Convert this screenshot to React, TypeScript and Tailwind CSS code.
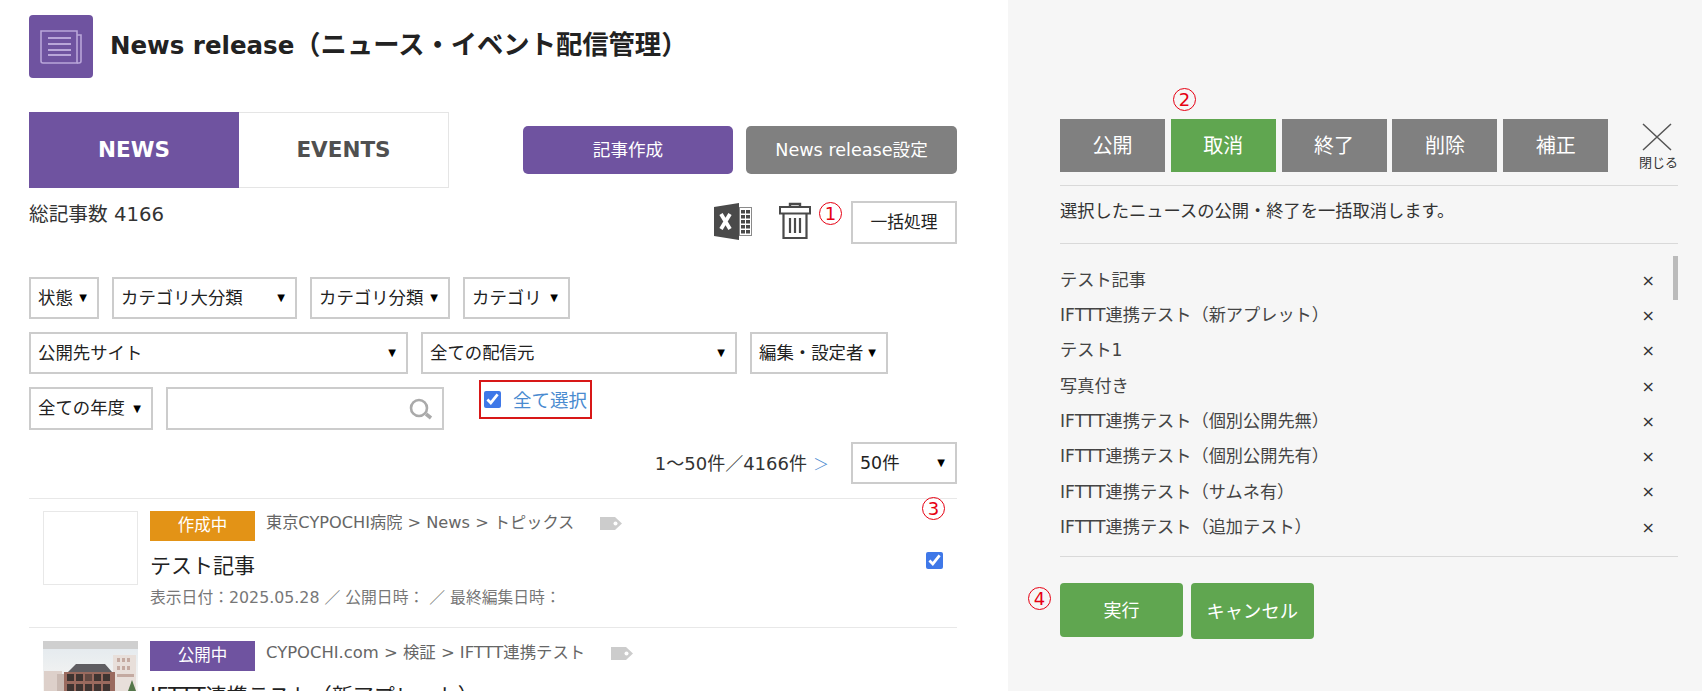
import React from "react";

function Select({ w, label, h = "h-[42px]" }: { w: string; label: string; h?: string }) {
  return (
    <div className={`${w} ${h} flex items-center justify-between border-2 border-[#cccccc] bg-white pl-[7px] pr-[10px] text-[17.4px] text-[#222222]`}>
      <span className="whitespace-nowrap">{label}</span>
      <span className="text-[10px] leading-none text-black">▼</span>
    </div>
  );
}

function Num({ c, className }: { c: string; className: string }) {
  return (
    <span className={`absolute flex h-[23px] w-[23px] items-center justify-center rounded-full border border-[#e60012] text-[18px] leading-none text-[#e60012] ${className}`}>
      {c}
    </span>
  );
}

function Tag({ className }: { className: string }) {
  return (
    <svg viewBox="0 0 22 13" className={className} fill="#cccccc">
      <path d="M0 0h15l7 6.500-7 6.500H0z" />
      <circle cx="15.500" cy="6.500" r="2" fill="#fff" />
    </svg>
  );
}

function Building() {
  return (
    <svg viewBox="0 0 95 50" className="block h-[50px] w-[95px]">
      <defs>
        <linearGradient id="sky" x1="0" y1="0" x2="0" y2="1">
          <stop offset="0" stopColor="#e2e9ee" />
          <stop offset="1" stopColor="#f8f6f3" />
        </linearGradient>
      </defs>
      <rect width="95" height="50" fill="url(#sky)" />
      <rect width="95" height="8" fill="#cfcfcf" />
      <rect x="1" y="30" width="18" height="20" fill="#ddd0ca" />
      <rect x="14" y="33" width="8" height="17" fill="#c9b9b2" />
      <rect x="70" y="14" width="23" height="36" fill="#e8dfda" />
      <g fill="#c4aaa1">
        <rect x="74" y="17" width="3" height="4" />
        <rect x="79" y="17" width="3" height="4" />
        <rect x="84" y="17" width="3" height="4" />
        <rect x="74" y="25" width="3" height="4" />
        <rect x="79" y="25" width="3" height="4" />
        <rect x="84" y="25" width="3" height="4" />
        <rect x="74" y="33" width="17" height="3" />
      </g>
      <path d="M33 23h29l7 8H25z" fill="#5f5d61" />
      <rect x="21" y="31" width="51" height="19" fill="#9a6a5e" />
      <g fill="#3f3431">
        <rect x="24" y="33" width="7" height="7" />
        <rect x="33" y="33" width="7" height="7" />
        <rect x="42" y="33" width="7" height="7" opacity="0.6" />
        <rect x="51" y="33" width="7" height="7" />
        <rect x="60" y="33" width="7" height="7" />
        <rect x="24" y="43" width="7" height="7" />
        <rect x="33" y="43" width="7" height="7" />
        <rect x="42" y="43" width="7" height="7" />
        <rect x="51" y="43" width="7" height="7" />
        <rect x="60" y="43" width="7" height="7" />
      </g>
      <path d="M85 50 L89 39 L93 50z" fill="#55774a" />
    </svg>
  );
}

const titles = [
  "テスト記事",
  "IFTTT連携テスト（新アプレット）",
  "テスト1",
  "写真付き",
  "IFTTT連携テスト（個別公開先無）",
  "IFTTT連携テスト（個別公開先有）",
  "IFTTT連携テスト（サムネ有）",
  "IFTTT連携テスト（追加テスト）",
];

export default function App() {
  return (
    <div className="flex h-[691px] overflow-hidden bg-white font-['DejaVu_Sans','Noto_Sans_CJK_JP',sans-serif] text-[#333333]">
      {/* left */}
      <div className="relative w-[1008px] shrink-0 pl-[29px] pr-[51px] pt-[15px]">
        <div className="flex h-[63px] items-center gap-[17px]">
          <div className="flex h-[63px] w-[64px] items-center justify-center rounded-[4px] bg-[#6f53a0]">
            <svg viewBox="0 0 44 36" className="h-[36px] w-[44px]" fill="none" stroke="#b9a6d9" strokeWidth="1.600">
              <path d="M2 2h36v32H4a2 2 0 0 1-2-2z" />
              <path d="M38 6h4v26a2 2 0 0 1-2 2h-2" />
              <path d="M9 9h23M9 15h23M9 21h23M9 26h23" strokeWidth="1.800" />
            </svg>
          </div>
          <h1 className="mt-[-3px] whitespace-nowrap text-[26.300px] font-bold leading-none text-[#222222]">
            <span className="text-[24.500px]">News release</span>（ニュース・イベント配信管理）
          </h1>
        </div>

        <div className="mt-[34px] flex items-start justify-between">
          <div className="flex h-[76px] w-[420px]">
            <div className="flex w-[210px] items-center justify-center bg-[#6f53a0] text-[21.500px] font-bold text-white">NEWS</div>
            <div className="flex w-[210px] items-center justify-center border-y border-r border-[#e5e5e5] text-[21.500px] font-bold text-[#505050]">EVENTS</div>
          </div>
          <div className="mt-[14px] flex gap-[13px]">
            <div className="flex h-[48px] w-[210px] items-center justify-center rounded-[5px] bg-[#6f53a0] text-[17.600px] text-white">記事作成</div>
            <div className="flex h-[48px] w-[211px] items-center justify-center rounded-[5px] bg-[#808080] text-[17.600px] text-white">News release設定</div>
          </div>
        </div>

        <div className="relative mt-[13px] flex h-[43px] items-start justify-between">
          <span className="text-[19.700px] leading-[28px]">総記事数 4166</span>
          <div className="flex items-start">
            <svg viewBox="0 0 38 37" className="mr-[27px] mt-[2px] h-[37px] w-[38px]">
              <path d="M0 4 25 0v37L0 33z" fill="#4a4a4a" />
              <path d="M25 4h13v29H25z" fill="#8a8a8a" />
              <path d="M26 5h11v27H26z" fill="#fff" />
              <g fill="#4a4a4a">
                <rect x="27" y="7" width="4" height="3.500" />
                <rect x="32" y="7" width="4" height="3.500" />
                <rect x="27" y="12" width="4" height="3.500" />
                <rect x="32" y="12" width="4" height="3.500" />
                <rect x="27" y="17" width="4" height="3.500" />
                <rect x="32" y="17" width="4" height="3.500" />
                <rect x="27" y="22" width="4" height="3.500" />
                <rect x="32" y="22" width="4" height="3.500" />
                <rect x="27" y="27" width="4" height="3.500" />
                <rect x="32" y="27" width="4" height="3.500" />
              </g>
              <path d="M7 11l9 15M16 11L7 26" stroke="#fff" strokeWidth="3.800" />
            </svg>
            <svg viewBox="0 0 32 37" className="mr-[40px] mt-[1px] h-[37px] w-[32px]" fill="none" stroke="#4a4a4a" strokeWidth="2">
              <path d="M1 5h30v6.500H1z" />
              <path d="M11 4.500V2h10v2.500" strokeWidth="2.400" />
              <path d="M4.500 11.500V36h23V11.500" strokeWidth="2.200" />
              <path d="M11 16v15M16 16v15M21 16v15" strokeWidth="2.200" />
            </svg>
            <div className="flex h-[43px] w-[106px] items-center justify-center border-2 border-[#cccccc] text-[16.800px] text-[#222222]">一括処理</div>
          </div>
          <Num c="1" className="left-[790px] top-[1px]" />
        </div>

        <div className="mt-[33px] flex gap-[13px]">
          <Select w="w-[70px]" label="状態" />
          <Select w="w-[185px]" label="カテゴリ大分類" />
          <Select w="w-[140px]" label="カテゴリ分類" />
          <Select w="w-[107px]" label="カテゴリ" />
        </div>
        <div className="mt-[13px] flex gap-[13px]">
          <Select w="w-[379px]" label="公開先サイト" />
          <Select w="w-[316px]" label="全ての配信元" />
          <Select w="w-[138px]" label="編集・設定者" />
        </div>
        <div className="relative mt-[13px] flex gap-[13px]">
          <Select w="w-[124px]" h="h-[43px]" label="全ての年度" />
          <div className="flex h-[43px] w-[278px] items-center justify-end border-2 border-[#cccccc] pr-[9px]">
            <svg viewBox="0 0 24 22" className="h-[22px] w-[24px]" fill="none" stroke="#aaaaaa">
              <circle cx="10" cy="10" r="8" strokeWidth="2.600" />
              <path d="M17 16l5 4" strokeWidth="3.600" />
            </svg>
          </div>
          <label className="absolute left-[450px] top-[-7px] flex h-[39px] w-[113px] items-center gap-[12px] border-2 border-[#d81818] pl-[3px]">
            <input type="checkbox" defaultChecked className="m-0 h-[17px] w-[17px] accent-[#3f78e8]" />
            <span className="mt-[2px] whitespace-nowrap text-[18.500px] text-[#4a8bd0]">全て選択</span>
          </label>
        </div>

        <div className="mt-[12px] flex h-[42px] items-center justify-end">
          <span className="whitespace-nowrap text-[18px] text-[#333333]">1～50件／4166件</span>
          <span className="ml-[6px] mr-[22px] font-['Noto_Sans_CJK_JP',sans-serif] text-[16px] font-light text-[#4a8bd0]">＞</span>
          <Select w="w-[106px]" label="50件" />
        </div>

        <div className="mt-[14px] border-t border-[#e8e8e8]">
          <div className="relative flex h-[129px] border-b border-[#e8e8e8] pl-[14px] pt-[12px]">
            <div className="h-[74px] w-[95px] border border-[#e8e8e8]" />
            <div className="ml-[12px]">
              <div className="flex h-[30px] items-center">
                <span className="flex h-[30px] w-[105px] items-center justify-center bg-[#e39316] text-[16.500px] text-white">作成中</span>
                <span className="ml-[11px] mt-[-5px] whitespace-nowrap text-[16.200px] text-[#666666]">東京CYPOCHI病院 &gt; News &gt; トピックス</span>
                <Tag className="ml-[26px] mt-[-5px] h-[13px] w-[22px]" />
              </div>
              <div className="mt-[10px] text-[21px] leading-[30px] text-[#222222]">テスト記事</div>
              <div className="mt-[5px] whitespace-nowrap text-[15.800px] leading-[24px] text-[#777777]">表示日付：2025.05.28 ／ 公開日時： ／ 最終編集日時：</div>
            </div>
            <input type="checkbox" defaultChecked className="absolute left-[897px] top-[53px] m-0 h-[17px] w-[17px] accent-[#3f78e8]" />
            <Num c="3" className="left-[893px] top-[-2px]" />
          </div>
          <div className="flex pl-[14px] pt-[13px]">
            <Building />
            <div className="ml-[12px]">
              <div className="flex h-[30px] items-center">
                <span className="flex h-[30px] w-[105px] items-center justify-center bg-[#6f53a0] text-[16.500px] text-white">公開中</span>
                <span className="ml-[11px] mt-[-5px] whitespace-nowrap text-[16.400px] text-[#666666]">CYPOCHI.com &gt; 検証 &gt; IFTTT連携テスト</span>
                <Tag className="ml-[26px] mt-[-5px] h-[13px] w-[22px]" />
              </div>
              <div className="mt-[10px] whitespace-nowrap text-[21px] leading-[30px] text-[#222222]">IFTTT連携テスト（新アプレット）</div>
            </div>
          </div>
        </div>
      </div>

      {/* right */}
      <div className="relative flex-1 bg-[#f6f6f6] pl-[52px] pr-[25px] pt-[119px]">
        <Num c="2" className="left-[165px] top-[88px]" />
        <div className="flex h-[53px] items-start">
          {["公開", "取消", "終了", "削除", "補正"].map((t) => (
            <div key={t} className={`mr-[5.800px] flex h-[53px] w-[105px] items-center justify-center text-[20px] text-white ${t === "取消" ? "bg-[#60a650]" : "bg-[#808080]"}`}>{t}</div>
          ))}
          <div className="ml-[25px] flex flex-col items-center">
            <svg viewBox="0 0 30 28" className="mt-[4px] ml-[-2px] h-[28px] w-[30px]" stroke="#555555" strokeWidth="1.500">
              <path d="M1 1l28 26M29 1L1 27" />
            </svg>
            <span className="mt-[3px] whitespace-nowrap text-[13px] leading-[18px] text-[#333333]">閉じる</span>
          </div>
        </div>
        <div className="mt-[13px] flex h-[59px] items-center border-y border-[#d9d9d9] pb-[6px] text-[17.250px] text-[#333333]">選択したニュースの公開・終了を一括取消します。</div>
        <div className="relative border-b border-[#d9d9d9] pb-[11px] pt-[19px]">
          {titles.map((t) => (
            <div key={t} className="flex h-[35.300px] items-center justify-between pr-[23px] text-[17.200px] text-[#444444]">
              <span className="whitespace-nowrap">{t}</span>
              <span className="text-[16px] leading-none text-[#333333]">×</span>
            </div>
          ))}
          <div className="absolute right-0 top-[12px] h-[44px] w-[5px] bg-[#bbbbbb]" />
        </div>
        <div className="relative mt-[26px] flex items-start gap-[8px]">
          <div className="flex h-[54px] w-[123px] items-center justify-center rounded-[4px] bg-[#60a650] text-[18px] text-white">実行</div>
          <div className="flex h-[56px] w-[122.500px] items-center justify-center rounded-[4px] bg-[#60a650] text-[18.300px] text-white">キャンセル</div>
          <Num c="4" className="left-[-32px] top-[4px]" />
        </div>
      </div>
    </div>
  );
}
